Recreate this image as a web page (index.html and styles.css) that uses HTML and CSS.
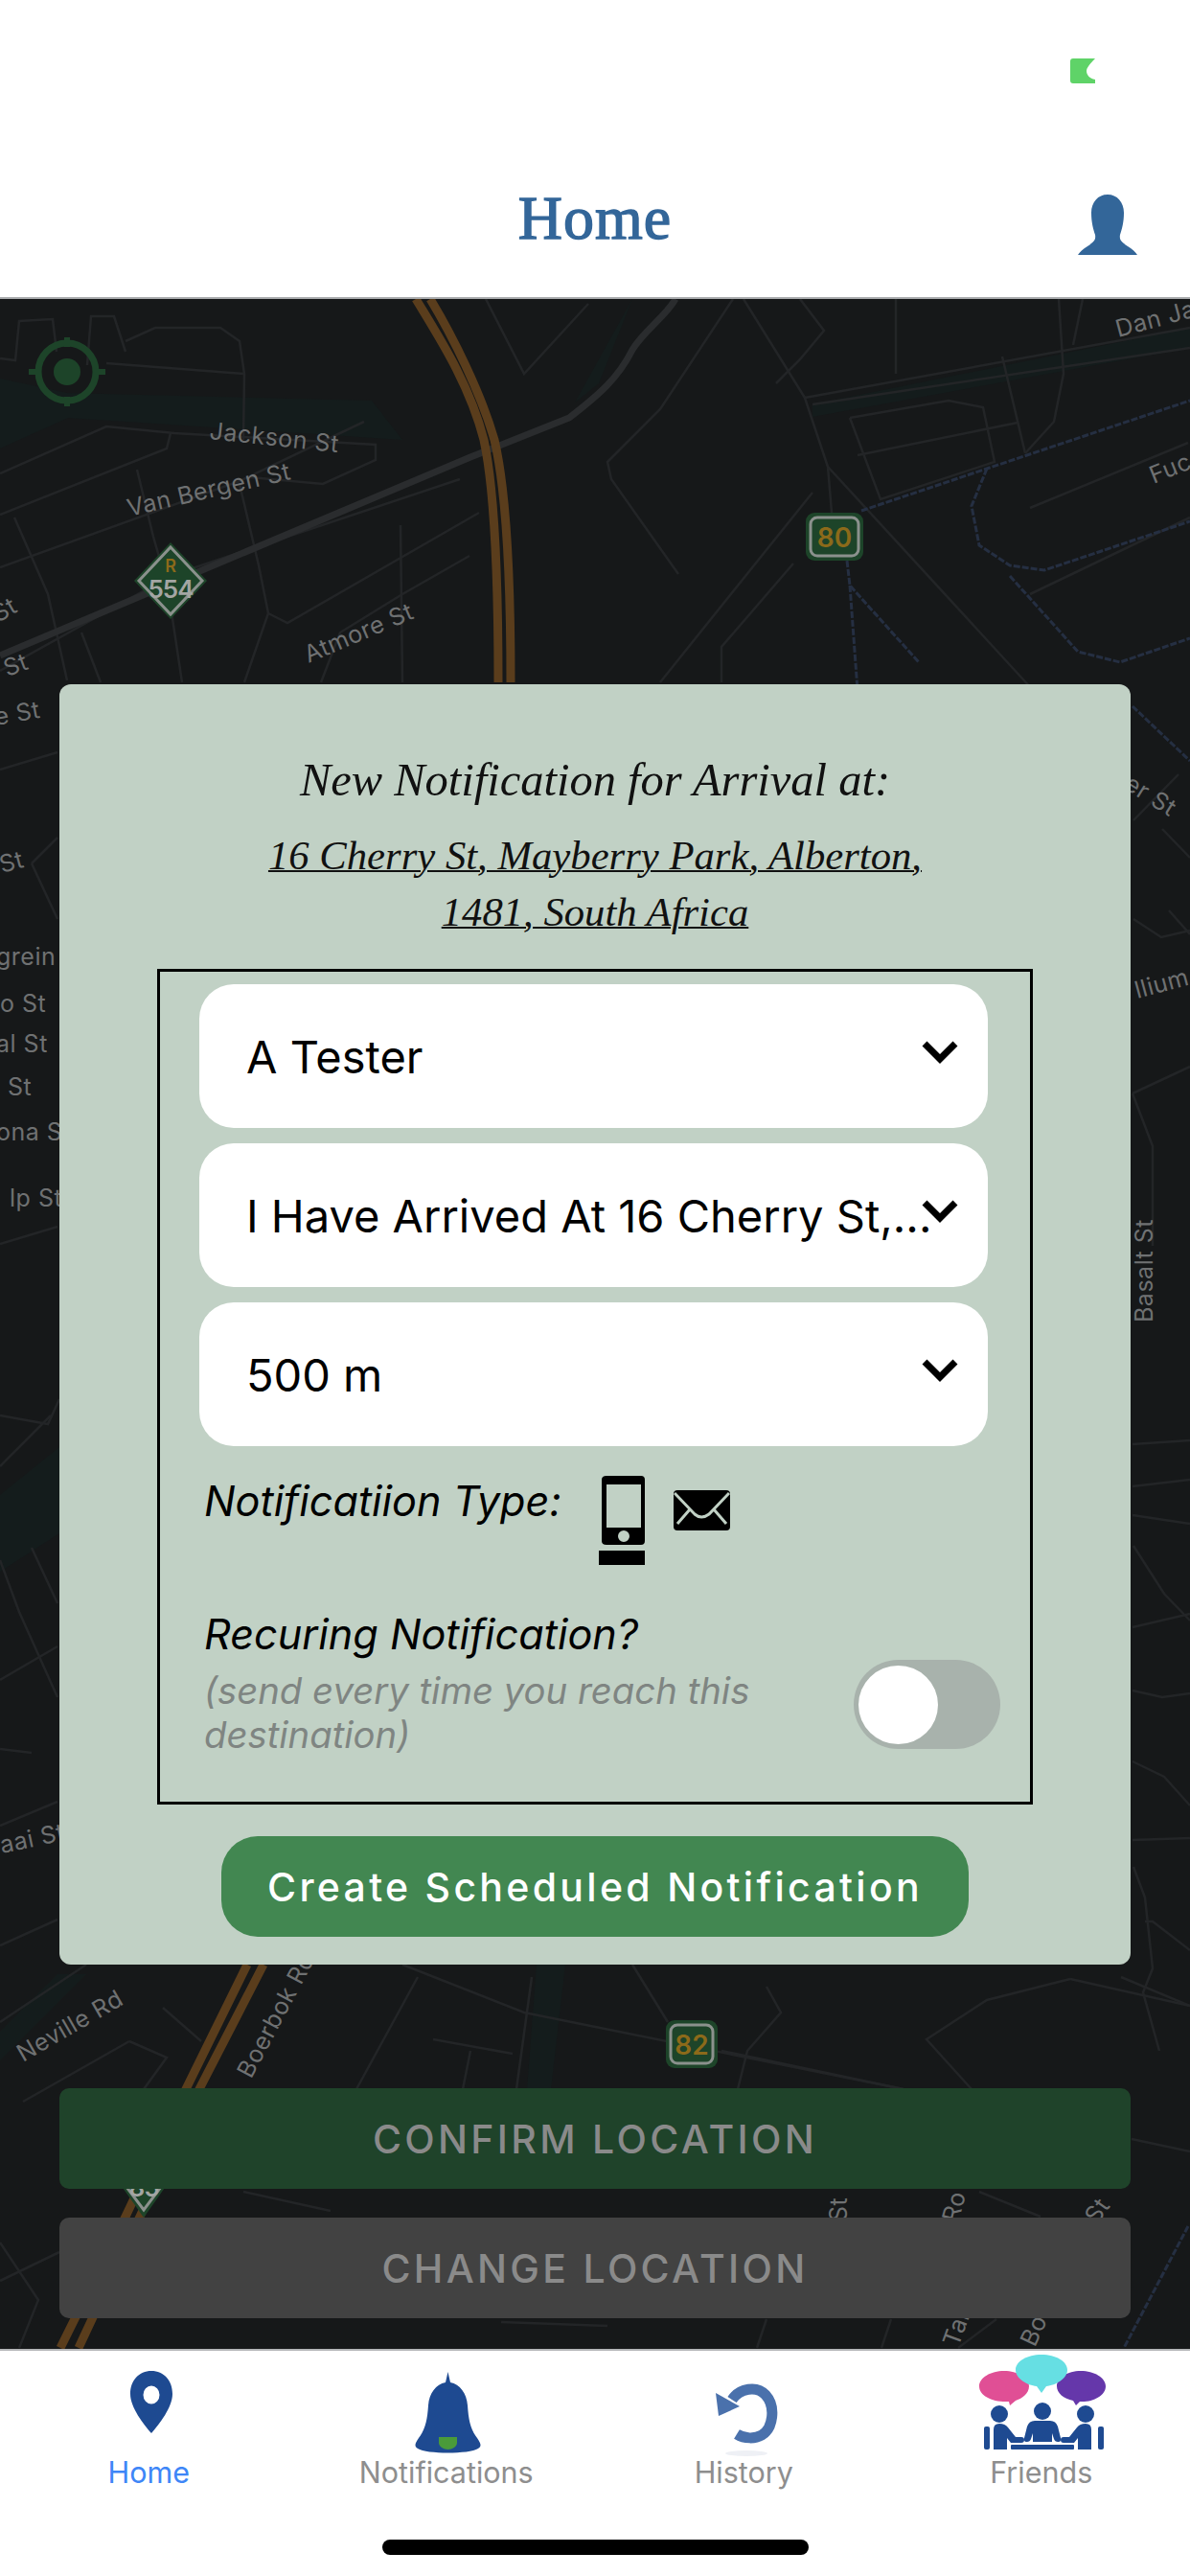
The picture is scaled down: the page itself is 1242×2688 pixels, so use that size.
FILE: index.html
```html
<!DOCTYPE html>
<html lang="en">

<head>
  <meta charset="UTF-8" />
  <meta name="viewport" content="width=device-width, initial-scale=1.0" />
  <title>Home</title>
  <link rel="stylesheet" href="styles.css">
</head>

<body>
  <div class="phone">
    <header class="header">
      <div class="status-bar">
        <svg class="battery" viewBox="0 0 26 26">
          <path d="M3 0H26C20 6 17 10 17 13C17 17 20 21 26 22V26H3Q0 26 0 23V3Q0 0 3 0Z" />
        </svg>
      </div>
      <div class="title-row">
        <span></span>
        <h1 class="title">Home</h1>
        <svg class="person" viewBox="0 0 62 63">
          <path d="M31 0C41 0 48 8 48 19C48 29 46 36 44 42C43 48 46 50 52 54C57 57 60 60 62 63H0C2 60 5 57 10 54C16 50 19 48 18 42C16 36 14 29 14 19C14 8 21 0 31 0Z" />
        </svg>
      </div>
    </header>

    <main class="map-area">
      <svg class="map" viewBox="0 312 1242 2139">
        <!-- parks -->
        <g class="park">
          <polygon points="0,395 70,410 388,418 420,459 71,436 0,468" />
          <polygon points="848,422 1242,342 1242,363 848,435" />
          <polygon points="600,420 660,312 625,400" />
          <polygon points="0,1560 62,1510 62,1600 0,1640" />
          <polygon points="0,2120 60,2060 90,2060 0,2150" />
          <polygon points="560,2050 590,2050 575,2180 550,2180" />
        </g>

        <!-- small streets -->
        <g class="road">
          <polyline points="0,374 16,376 20,335 55,333 59,367" />
          <polyline points="91,381 95,330 119,330 131,367" />
          <polyline points="131,356 162,342 230,342 250,356 255,390 254,459" />
          <polyline points="111,379 254,390" />
          <polyline points="0,494 111,445 182,452 392,464 392,480 337,505 261,498" />
          <polyline points="0,537 174,468 178,452" />
          <polyline points="0,592 250,502 380,440" />
          <polyline points="15,540 50,620 70,710" />
          <polyline points="143,490 160,560 175,612 190,712" />
          <polyline points="250,505 270,590 280,640 255,712" />
          <polyline points="0,700 180,600 480,500" />
          <polyline points="280,640 300,650 500,535" />
          <polyline points="335,712 355,660 420,620 490,580" />
          <polyline points="418,548 420,712" />
          <polyline points="85,660 105,712" />
          <polyline points="765,312 689,427 634,482 638,500 708,599" />
          <polyline points="776,312 840,415 864,487 868,535" />
          <polyline points="507,312 547,390 614,317" />
          <polyline points="840,415 1242,342" />
          <polyline points="848,422 1242,363" />
          <polyline points="887,436 990,418 1026,425 1038,482 919,521 887,436" />
          <polyline points="895,475 1062,441" />
          <polyline points="935,312 935,390" />
          <polyline points="1046,372 1070,473" />
          <polyline points="864,487 1078,720" />
          <polyline points="689,712 848,514" />
          <polyline points="753,712 753,675 828,588" />
          <polyline points="835,312 860,345 835,375 810,400" />
          <polyline points="1070,473 1100,440 1110,390 1105,312" />
          <polyline points="1130,312 1120,360" />
          <polyline points="1075,530 1240,462" />
          <polyline points="1075,620 1242,540" />
          <polyline points="0,803 60,785" />
          <polyline points="33,901 60,874" />
          <polyline points="33,901 60,959" />
          <polyline points="0,1298 60,1280" />
          <polyline points="0,1477 50,1486 62,1460" />
          <polyline points="0,1530 53,1477" />
          <polyline points="0,1628 20,1682 60,1771" />
          <polyline points="0,1753 60,1718" />
          <polyline points="33,1615 60,1673" />
          <polyline points="0,1825 33,1829" />
          <polyline points="0,1905 60,1880" />
          <polyline points="0,2030 60,2003" />
          <polyline points="1182,1141 1242,1113" />
          <polyline points="1182,1141 1203,1196 1203,1300" />
          <polyline points="1183,959 1212,978 1242,971" />
          <polyline points="1220,950 1242,975" />
          <polyline points="1213,865 1242,895" />
          <polyline points="1230,808 1183,856" />
          <polyline points="1182,1507 1242,1503" />
          <polyline points="1182,1551 1242,1544" />
          <polyline points="1182,1581 1242,1590" />
          <polyline points="1183,1613 1215,1663 1242,1691" />
          <polyline points="1182,1698 1242,1684" />
          <polyline points="1182,1764 1213,1771 1242,1767" />
          <polyline points="1182,1838 1215,1854 1242,1884" />
          <polyline points="1182,1920 1242,1918" />
          <polyline points="1183,1948 1195,1980 1203,2054 1193,2079 1210,2140" />
          <polyline points="1170,2063 1242,2093" />
          <polyline points="1195,2005 1203,2005 1242,2035" />
          <polyline points="420,2050 547,2100 943,2180" />
          <polyline points="135,2130 24,2193" />
          <polyline points="135,2130 174,2147 150,2180" />
          <polyline points="90,2050 0,2110" />
          <polyline points="210,2130 170,2095" />
          <polyline points="436,2063 372,2180" />
          <polyline points="452,2128 535,2143" />
          <polyline points="491,2140 483,2180" />
          <polyline points="555,2063 539,2180" />
          <polyline points="660,2050 697,2110" />
          <polyline points="800,2073 815,2100 780,2140 770,2180" />
          <polyline points="1117,2065 1242,2093" />
          <polyline points="1117,2065 1030,2087 967,2128 1014,2180" />
          <polyline points="753,2140 943,2180" />
          <polyline points="1181,2232 1242,2245" />
          <polyline points="254,2287 345,2307" />
          <polyline points="1022,2287 1086,2313" />
          <polyline points="0,2340 40,2400 20,2450" />
          <polyline points="0,2380 62,2350" />
          <polyline points="523,2423 634,2427" />
          <polyline points="800,2420 790,2450" />
          <polyline points="930,2420 920,2450" />
          <polyline points="1040,2420 1000,2450" />
        </g>

        <!-- railway lines -->
        <g class="rail">
          <polyline points="899,533 1030,489 1242,418" />
          <polyline points="1030,489 1014,528 1022,569 1054,590 1090,595 1242,544" />
          <polyline points="1054,601 1125,680 1169,691 1242,666" />
          <polyline points="884,585 887,611 959,691" />
          <polyline points="887,611 895,720" />
          <polyline points="1182,737 1242,794" />
          <polyline points="1240,2323 1173,2450" />
        </g>

        <!-- main road -->
        <path class="main-road" d="M0 684L491 477L594 436C625 412 645 395 660 365C672 345 695 330 705 312" />

        <!-- highway -->
        <g class="highway">
          <path d="M434 312C457 350 490 400 505 459C516 510 520 600 520 712" />
          <path d="M449 312C472 350 502 410 516 459C528 510 533 600 533 712" />
          <polyline points="258,2050 194,2180 131,2313 63,2450" />
          <polyline points="275,2050 208,2180 146,2313 82,2450" />
        </g>

        <!-- street names -->
        <g class="street">
          <text transform="translate(218 458) rotate(6)">Jackson St</text>
          <text transform="translate(135 539) rotate(-13)">Van Bergen St</text>
          <text transform="translate(322 692) rotate(-23)">Atmore St</text>
          <text transform="translate(1167 352) rotate(-15)">Dan Ja</text>
          <text transform="translate(1204 505) rotate(-22)">Fuc</text>
          <text transform="translate(-2 650) rotate(-30)">St</text>
          <text transform="translate(-14 714) rotate(-20)">n St</text>
          <text transform="translate(-4 757) rotate(-10)">e St</text>
          <text transform="translate(2 911) rotate(-15)">St</text>
          <text x="-4" y="1007">grein</text>
          <text x="0" y="1056">o St</text>
          <text x="-4" y="1098">al St</text>
          <text x="8" y="1143">St</text>
          <text x="-4" y="1190">ona S</text>
          <text x="10" y="1259">lp St</text>
          <text transform="translate(2 1934) rotate(-12)">aai St</text>
          <text transform="translate(1172 822) rotate(32)">er St</text>
          <text transform="translate(1187 1042) rotate(-15)">llium</text>
          <text transform="translate(1203 1380) rotate(-90)">Basalt St</text>
          <text transform="translate(24 2152) rotate(-30)">Neville Rd</text>
          <text transform="translate(262 2170) rotate(-62)">Boerbok Rd</text>
          <text transform="translate(884 2318) rotate(-90)">St</text>
          <text transform="translate(1000 2320) rotate(-75)">Ro</text>
          <text transform="translate(1145 2322) rotate(-55)">St</text>
          <text transform="translate(1000 2450) rotate(-70)">Tait</text>
          <text transform="translate(1080 2450) rotate(-65)">Bosk</text>
        </g>

        <!-- my location -->
        <g class="locate">
          <circle class="locate-ring" cx="70" cy="388" r="30" />
          <circle cx="70" cy="388" r="14" />
          <rect x="67" y="352" width="6" height="10" />
          <rect x="67" y="414" width="6" height="10" />
          <rect x="30" y="385" width="10" height="6" />
          <rect x="100" y="385" width="10" height="6" />
        </g>

        <!-- route shields -->
        <g class="shield">
          <path class="shield-back" d="M178 566L216 606L178 646L140 606Z" />
          <path class="shield-line" d="M178 571L211 606L178 641L145 606Z" />
          <text class="shield-r" x="178" y="597">R</text>
          <text class="shield-num" x="178" y="624">554</text>
        </g>
        <g class="shield">
          <rect class="shield-back" x="841" y="535" width="60" height="50" rx="9" />
          <rect class="shield-line" x="846" y="540" width="50" height="40" rx="7" />
          <text class="shield-gold" x="871" y="571">80</text>
        </g>
        <g class="shield">
          <rect class="shield-back" x="695" y="2108" width="54" height="50" rx="9" />
          <rect class="shield-line" x="700" y="2113" width="44" height="40" rx="7" />
          <text class="shield-gold" x="722" y="2144">82</text>
        </g>
        <g class="shield">
          <path class="shield-back" d="M119 2270H181L150 2314Z" />
          <path class="shield-line" d="M126 2274H174L150 2306Z" />
          <text class="shield-num" x="150" y="2292">85</text>
        </g>
      </svg>

      <!-- New notification popup -->
      <section class="modal">
        <h2 class="modal-title">New Notification for Arrival at:</h2>
        <p class="modal-address">16 Cherry St, Mayberry Park, Alberton,<br>1481, South Africa</p>

        <div class="form-box">
          <div class="select">
            <span>A Tester</span>
            <svg class="chevron" viewBox="0 0 40 25"><path d="M4 4L20 20L36 4" /></svg>
          </div>
          <div class="select">
            <span>I Have Arrived At 16 Cherry St,...</span>
            <svg class="chevron" viewBox="0 0 40 25"><path d="M4 4L20 20L36 4" /></svg>
          </div>
          <div class="select">
            <span>500 m</span>
            <svg class="chevron" viewBox="0 0 40 25"><path d="M4 4L20 20L36 4" /></svg>
          </div>

          <div class="type-row">
            <span class="form-label">Notificatiion Type:</span>
            <svg class="phone-icon" viewBox="0 0 48 93">
              <path fill-rule="evenodd" d="M8 0H44Q48 0 48 4V68Q48 72 44 72H8Q3 72 3 68V4Q3 0 8 0ZM8 9V54H44V9ZM26 57A6 6 0 1 0 26 69A6 6 0 1 0 26 57Z" />
              <rect x="0" y="78" width="48" height="15" />
            </svg>
            <svg class="mail-icon" viewBox="0 0 59 42">
              <rect width="59" height="42" rx="4" />
              <path d="M1 3L22 25Q29 31 37 25L58 3M17 20L4 35M42 20L55 35" />
            </svg>
          </div>

          <div class="recurring-row">
            <div class="recurring-text">
              <div class="form-label">Recuring Notification?</div>
              <div class="form-hint">(send every time you reach this destination)</div>
            </div>
            <div class="toggle"><div class="toggle-knob"></div></div>
          </div>
        </div>

        <button class="create-btn">Create Scheduled Notification</button>
      </section>

      <div class="location-buttons">
        <button class="location-btn confirm">CONFIRM LOCATION</button>
        <button class="location-btn change">CHANGE LOCATION</button>
      </div>
    </main>

    <nav class="tab-bar">
      <div class="tabs">
        <div class="tab active">
          <svg class="tab-icon" viewBox="85 2455 140 110">
            <path class="navy" fill-rule="evenodd" d="M158 2474C171 2474 180 2484 180 2498C180 2512 166 2530 158 2539C150 2530 136 2512 136 2498C136 2484 145 2474 158 2474ZM158 2489.500A8.500 9.500 0 1 0 158 2508.500A8.500 9.500 0 1 0 158 2489.500Z" />
          </svg>
          <span>Home</span>
        </div>
        <div class="tab">
          <svg class="tab-icon" viewBox="396 2455 140 110">
            <path class="navy" d="M467.500 2475L470 2486C480 2488 487 2497 488 2510C489 2525 491 2535 498 2544C503 2551 502 2553 499 2555C490 2561 445 2561 436 2555C433 2553 432 2551 437 2544C444 2535 446 2525 447 2510C448 2497 455 2488 465 2486Z" />
            <path class="bell-green" d="M458 2543H477V2549C477 2553 472 2556 467.500 2556C463 2556 458 2553 458 2549Z" />
          </svg>
          <span>Notifications</span>
        </div>
        <div class="tab">
          <svg class="tab-icon" viewBox="706 2455 140 110">
            <path class="history-arc" d="M764 2504C772 2492 790 2489 799 2499C810 2511 807 2534 795 2541C788 2545 777 2545 769 2540" />
            <path class="history-head" d="M747 2497L772 2511L750 2521Z" />
            <ellipse class="history-shadow" cx="779" cy="2560" rx="22" ry="3" />
          </svg>
          <span>History</span>
        </div>
        <div class="tab">
          <svg class="tab-icon" viewBox="1017 2455 140 110">
            <path class="pink" d="M1048 2474C1062 2474 1074 2481 1074 2490C1074 2498 1066 2503 1060 2505L1054 2510L1053 2506C1036 2507 1022 2500 1022 2490C1022 2481 1034 2474 1048 2474Z" />
            <path class="purple" d="M1128 2474C1142 2474 1154 2481 1154 2490C1154 2500 1140 2507 1127 2506L1123 2510L1120 2505C1110 2503 1103 2497 1103 2490C1103 2481 1114 2474 1128 2474Z" />
            <path class="cyan" d="M1087 2457C1102 2457 1114 2464 1114 2473C1114 2482 1102 2489 1092 2490L1087 2497L1082 2490C1072 2489 1060 2482 1060 2473C1060 2464 1072 2457 1087 2457Z" />
            <g class="navy">
              <circle cx="1043" cy="2519" r="9" />
              <circle cx="1088" cy="2516" r="9" />
              <circle cx="1133" cy="2519" r="9" />
              <path d="M1080 2526H1096Q1102 2526 1104 2532L1107 2544Q1108 2548 1104 2548Q1101 2548 1100 2545L1098 2539V2548H1078V2539L1076 2545Q1075 2548 1072 2548Q1068 2548 1069 2544L1072 2532Q1074 2526 1080 2526Z" />
              <path id="side-person" d="M1037 2535Q1037 2529 1043 2529Q1049 2529 1052 2533L1060 2543H1066Q1069 2543 1069 2546T1066 2549H1055L1051 2544V2556H1037Z" />
              <use href="#side-person" transform="translate(2176 0) scale(-1 1)" />
              <rect x="1055" y="2551" width="66" height="5" rx="1" />
              <rect x="1027" y="2532" width="6" height="24" rx="2" />
              <rect x="1146" y="2532" width="6" height="24" rx="2" />
            </g>
          </svg>
          <span>Friends</span>
        </div>
      </div>
      <div class="home-indicator"></div>
    </nav>
  </div>
</body>

</html>
```

FILE: styles.css
```css
* {
  box-sizing: border-box;
  margin: 0;
  padding: 0;
}

body {
  background-color: white;
  font-family: Inter, 'Liberation Sans', sans-serif;
}

.phone {
  display: flex;
  flex-direction: column;
  width: 1242px;
  height: 2688px;
  overflow: hidden;
}

/* header */

.header {
  height: 312px;
  background-color: white;
  border-bottom: 2px solid #a9abad;
}

.status-bar {
  display: flex;
  justify-content: flex-end;
  height: 203px;
  padding: 61px 99px 0 0;
}

.battery {
  width: 26px;
  height: 26px;
  fill: #5fd368;
}

.title-row {
  display: grid;
  grid-template-columns: 1fr auto 1fr;
  padding-right: 55px;
  padding-left: 55px;
}

.title {
  margin-top: -10px;
  color: #336699;
  font-family: 'Liberation Serif', serif;
  font-size: 64px;
  font-weight: 400;
  letter-spacing: 1px;
  line-height: 70px;
  -webkit-text-stroke: 1.4px #336699;
}

.person {
  justify-self: end;
  width: 62px;
  height: 63px;
  fill: #336699;
}

/* map */

.map-area {
  position: relative;
  display: flex;
  flex: 1;
  flex-direction: column;
  justify-content: flex-end;
  gap: 30px;
  padding: 0 62px 32px;
  background-color: #161819;
}

.map {
  position: absolute;
  top: 0;
  left: 0;
  width: 1242px;
  height: 2139px;
}

.park polygon {
  fill: #141c1c;
}

.road polyline {
  fill: none;
  stroke: #232527;
  stroke-width: 2.5;
}

.rail polyline {
  fill: none;
  stroke: #252f42;
  stroke-width: 3;
  stroke-dasharray: 7 2;
}

.main-road {
  fill: none;
  stroke: #2a2c2e;
  stroke-width: 7;
}

.highway path,
.highway polyline {
  fill: none;
  stroke: #5a3d1c;
  stroke-width: 9;
}

.street text {
  fill: #6f7172;
  font-size: 25px;
  letter-spacing: 0.5px;
}

.locate {
  fill: #1d4429;
}

.locate-ring {
  fill: none;
  stroke: #1d4429;
  stroke-width: 7;
}

.shield text {
  text-anchor: middle;
  font-weight: 600;
}

.shield-back {
  fill: #1d4429;
}

.shield-line {
  fill: #1d4429;
  stroke: #8b918d;
  stroke-width: 3;
}

.shield-r {
  fill: #8c6a1a;
  font-size: 18px;
}

.shield-num {
  fill: #a3a6a3;
  font-size: 26px;
  letter-spacing: -1px;
}

.shield-gold {
  fill: #8c6a1a;
  font-size: 28px;
}

/* popup */

.modal {
  position: absolute;
  top: 402px;
  left: 62px;
  z-index: 2;
  display: flex;
  flex-direction: column;
  align-items: center;
  width: 1118px;
  height: 1336px;
  padding-top: 70px;
  background-color: #c1d1c5;
  border-radius: 12px;
  color: #111;
  text-align: center;
}

.modal-title,
.modal-address {
  font-family: 'Liberation Serif', serif;
  font-style: italic;
  font-weight: 400;
  line-height: 59px;
}

.modal-title {
  font-size: 48.5px;
}

.modal-address {
  margin-top: 20px;
  font-size: 42.7px;
  text-decoration: underline;
  text-decoration-thickness: 2px;
}

.form-box {
  align-self: stretch;
  margin: 30px 102px 0;
  padding: 13px 44px 47px 41px;
  border: 3px solid black;
  text-align: left;
}

.select {
  position: relative;
  display: flex;
  align-items: center;
  height: 150px;
  margin-bottom: 16px;
  padding-left: 49px;
  background-color: white;
  border-radius: 36px;
  color: black;
  font-size: 47px;
}

.chevron {
  position: absolute;
  top: 58px;
  right: 30px;
  width: 40px;
  height: 25px;
  fill: none;
  stroke: black;
  stroke-width: 7;
}

.type-row {
  display: flex;
  align-items: flex-start;
  margin-top: 31px;
  margin-left: 5px;
}

.form-label {
  color: black;
  font-size: 43.2px;
  font-style: italic;
  line-height: 53px;
}

.phone-icon {
  width: 48px;
  height: 93px;
  margin-left: 39px;
}

.mail-icon {
  width: 59px;
  height: 42px;
  margin-top: 15px;
  margin-left: 30px;
}

.mail-icon path {
  fill: none;
  stroke: #c1d1c5;
  stroke-width: 3;
}

.recurring-row {
  display: flex;
  justify-content: space-between;
  margin-top: 46px;
  margin-right: -13px;
  margin-left: 5px;
}

.recurring-text {
  width: 620px;
}

.form-hint {
  margin-top: 9px;
  color: #7f8582;
  font-size: 38.3px;
  font-style: italic;
  line-height: 46px;
}

.toggle {
  align-self: flex-end;
  width: 153px;
  height: 93px;
  margin-bottom: 8px;
  padding: 6px 5px;
  background-color: #a8b2ac;
  border-radius: 47px;
}

.toggle-knob {
  width: 83px;
  height: 82px;
  background-color: white;
  border-radius: 50%;
}

.create-btn {
  width: 780px;
  height: 105px;
  margin-top: 33px;
  background-color: #428751;
  border: none;
  border-radius: 38px;
  color: white;
  font-family: inherit;
  font-size: 41px;
  font-weight: 500;
  letter-spacing: 3.3px;
}

.location-buttons {
  position: relative;
  display: flex;
  flex-direction: column;
  gap: 30px;
}

.location-btn {
  height: 105px;
  border: none;
  border-radius: 10px;
  color: #8a8a8a;
  font-family: inherit;
  font-size: 41px;
  font-weight: 500;
  letter-spacing: 3.3px;
}

.location-btn.confirm {
  background-color: #1f432a;
}

.location-btn.change {
  background-color: #424242;
}

/* tab bar */

.tab-bar {
  position: relative;
  z-index: 3;
  height: 237px;
  background-color: white;
  border-top: 2px solid #b5b6b8;
}

.tabs {
  display: grid;
  grid-template-columns: repeat(4, 1fr);
  padding-top: 2px;
}

.tab {
  display: flex;
  flex-direction: column;
  align-items: center;
  color: #8e8e8e;
  font-size: 30.5px;
  line-height: 36px;
}

.tab.active {
  color: #3e86f7;
}

.tab span {
  margin-top: -3px;
}

.tab-icon {
  width: 140px;
  height: 110px;
}

.navy {
  fill: #1e4a91;
}

.bell-green {
  fill: #4a9b3a;
}

.history-arc {
  fill: none;
  stroke: #4a71ac;
  stroke-width: 11;
}

.history-head {
  fill: #4a71ac;
}

.history-shadow {
  fill: #eef0f5;
}

.pink {
  fill: #e04f95;
}

.purple {
  fill: #6537aa;
}

.cyan {
  fill: #66dfe3;
}

.home-indicator {
  width: 445px;
  height: 16px;
  margin: 52px auto 0;
  background-color: black;
  border-radius: 8px;
}
```
